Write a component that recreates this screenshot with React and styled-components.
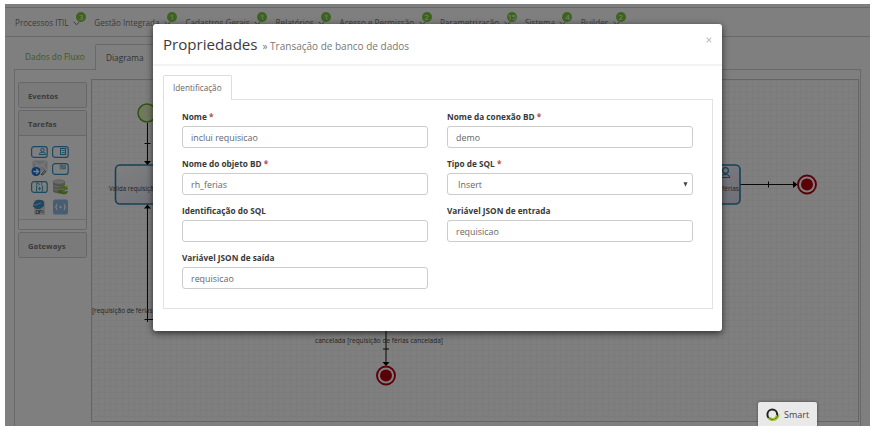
import React from "react";
import styled, { createGlobalStyle } from "styled-components";

const GlobalStyle = createGlobalStyle`
  * { box-sizing: border-box; }
  body { margin: 0; background: #fff; font-family: "Open Sans", sans-serif; font-size: 9px; color: #555; }
`;

const Frame = styled.div`
  position: relative;
  width: 865px;
  height: 422px;
  margin: 4px 0 0 5px;
  overflow: hidden;
  background: #fff;
`;

const MenuBar = styled.nav`
  display: flex;
  gap: 14.4px;
  height: 30px;
  margin-top: 3px;
  padding: 1px 0 0 10px;
  align-items: center;
  border-top: 1px solid #d2d2d2;
  border-bottom: 1px solid #d2d2d2;
`;

const MenuItem = styled.div`
  position: relative;
  display: flex;
  align-items: center;
  gap: 4.5px;
  white-space: nowrap;
  font-size: 8.15px;
  line-height: 12px;
  color: #777;
`;

const Badge = styled.span`
  position: absolute;
  top: -5px;
  right: -6px;
  width: 10px;
  height: 10px;
  border-radius: 50%;
  background: #79c83c;
  color: #fff;
  font-size: 7.5px;
  letter-spacing: -0.3px;
  line-height: 10px;
  text-align: center;
`;

const TabStrip = styled.div`
  display: flex;
  align-items: flex-end;
  height: 32px;
  padding-left: 10px;
`;

const PageTab = styled.div`
  height: ${(p) => (p.$active ? 26 : 25)}px;
  margin-bottom: ${(p) => (p.$active ? "-1px" : 0)};
  padding: 0 10px;
  width: ${(p) => p.$width}px;
  line-height: 26px;
  font-size: 8.3px;
  white-space: nowrap;
  color: ${(p) => (p.$active ? "#666" : "#73b446")};
  background: #fff;
  border: ${(p) => (p.$active ? "1px solid #d2d2d2" : "none")};
  border-bottom: none;
  border-radius: 2px 2px 0 0;
`;

const Workspace = styled.div`
  display: grid;
  grid-template-columns: 69px 768px;
  gap: 4px;
  width: 847px;
  height: 360px;
  margin-left: 9px;
  padding: 9px 0 0 3px;
  border: 1px solid #d2d2d2;
`;

const Palette = styled.aside`
  display: flex;
  flex-direction: column;
  gap: 2px;
  padding-top: 3px;
`;

const Group = styled.section`
  border: 1px solid #cfcfcf;
  border-radius: 2px;
`;

const GroupTitle = styled.div`
  height: ${(p) => (p.$open ? 25 : 24)}px;
  padding-left: 9px;
  line-height: 26px;
  font-size: 7.7px;
  font-weight: 700;
  color: #777;
  background: #f5f5f5;
  border-bottom: ${(p) => (p.$open ? "1px solid #cfcfcf" : "none")};
`;

const IconGrid = styled.div`
  display: grid;
  grid-template-columns: 17px 17px;
  grid-template-rows: 17px 17px 20px 19px;
  column-gap: 4px;
  padding: 7px 0 0 12px;
  height: 83px;
  align-items: center;
`;

const GroupFooter = styled.div`
  height: 10px;
  border-top: 1px solid #ddd;
`;

const Canvas = styled.div`
  border: 1px solid #cbcbcb;
  height: 343px;
  overflow: hidden;
  background-image: linear-gradient(#f6f6f6 1px, transparent 1px),
    linear-gradient(90deg, #f6f6f6 1px, transparent 1px);
  background-size: 6px 6px;
`;

const Backdrop = styled.div`
  position: absolute;
  inset: 0;
  background: rgba(0, 0, 0, 0.5);
`;

const Dialog = styled.div`
  position: absolute;
  left: 148px;
  top: 20px;
  width: 569px;
  height: 307px;
  background: #fff;
  border-radius: 3px;
  box-shadow: 0 2px 7px rgba(0, 0, 0, 0.65);
`;

const DialogHeader = styled.header`
  display: flex;
  align-items: baseline;
  height: 42px;
  padding: 9px 10px 0 10px;
  border-bottom: 2px solid #f3f3f3;
`;

const Title = styled.h1`
  margin: 0;
  font-size: 15.1px;
  font-weight: 400;
  line-height: 22px;
  color: #3c3c3c;
`;

const Subtitle = styled.small`
  margin-left: 5px;
  font-size: 10px;
  color: #777;
  white-space: nowrap;
`;

const Close = styled.button`
  margin: -18px 0 0 auto;
  padding: 0;
  align-self: center;
  border: 0;
  background: none;
  line-height: 0;
`;

const DialogBody = styled.div`
  padding: 9px 9px 0 10px;
`;

const DialogTab = styled.div`
  position: relative;
  width: 69px;
  height: 25px;
  margin-bottom: -1px;
  padding-left: 9px;
  border: 1px solid #ddd;
  border-bottom: 0;
  border-radius: 2px 2px 0 0;
  background: #fff;
  font-size: 8.2px;
  line-height: 24px;
  color: #666;
`;

const Fields = styled.form`
  display: grid;
  grid-template-columns: 246px 246px;
  grid-auto-rows: 47px;
  column-gap: 19px;
  height: 210px;
  padding: 10px 0 0 18px;
  border: 1px solid #e2e2e2;
`;

const Field = styled.label`
  display: block;
`;

const FieldLabel = styled.span`
  display: block;
  height: 16px;
  line-height: 13px;
  font-size: 8.25px;
  font-weight: 700;
  color: #393939;
`;

const Required = styled.span`
  color: #b94a48;
`;

const Control = styled.span`
  display: flex;
  align-items: center;
  justify-content: space-between;
  height: 22px;
  padding: 0 4px 0 ${(p) => (p.$select ? 10 : 8)}px;
  border: 1px solid #ccc;
  border-radius: 3px;
  font-size: 8.9px;
  color: #666;
`;

const SmartButton = styled.button`
  position: absolute;
  left: 753px;
  top: 398px;
  width: 59px;
  height: 25px;
  display: flex;
  align-items: center;
  gap: 4px;
  padding: 0 0 0 8px;
  border: 0;
  border-radius: 2px 2px 0 0;
  background: #e9e9e9;
  box-shadow: 0 0 3px rgba(0, 0, 0, 0.45);
  font-family: inherit;
  font-size: 9px;
  color: #444;
`;

const menu = [
  ["Processos ITIL", 3],
  ["Gestão Integrada", 1],
  ["Cadastros Gerais", 1],
  ["Relatórios", 1],
  ["Acesso e Permissão", 2],
  ["Parametrização", 15],
  ["Sistema", 4],
  ["Builder", 2],
];

const fields = [
  { label: "Nome", required: true, value: "inclui requisicao" },
  { label: "Nome da conexão BD", required: true, value: "demo" },
  { label: "Nome do objeto BD", required: true, value: "rh_ferias" },
  { label: "Tipo de SQL", required: true, value: "Insert", select: true },
  { label: "Identificação do SQL", value: "" },
  { label: "Variável JSON de entrada", value: "requisicao" },
  { label: "Variável JSON de saída", value: "requisicao" },
];

const ChevronSvg = styled.svg`
  margin-top: 2px;
`;

const Chevron = () => (
  <ChevronSvg width="7" height="5" viewBox="0 0 7 5" fill="none" stroke="#777">
    <path d="M.5 .7 3.5 3.8 6.5 .7" />
  </ChevronSvg>
);

function TaskIcon({ kind }) {
  return (
    <svg width="17" height="12" viewBox="0 0 17 12" fill="none" stroke="#3694c0">
      <rect x=".6" y=".6" width="15.6" height="10.8" rx="2.5" strokeWidth="1.2" />
      {kind === "user" && (
        <g>
          <circle cx="11.5" cy="4" r="1.7" />
          <path d="M8.2 8.5c0-2 1.8-2 3.3-2s3.3 0 3.3 2z" />
        </g>
      )}
      {kind === "form" && (
        <g>
          <rect x="8.500" y="2.500" width="5" height="6" />
          <path d="M9.800 4.500h3M9.800 6.500h3" strokeWidth=".8" />
        </g>
      )}
      {kind === "card" && (
        <g>
          <rect x="8" y="2" width="5.6" height="4" fill="#b7d5e4" strokeWidth=".4" />
          <path d="M8.8 3.6h2M11 5h2" strokeWidth=".8" />
        </g>
      )}
      {kind === "rule" && (
        <g>
          <path d="M5.5 4V1.7h1.2v1.2H5.5M8 1.7v2h1M10.5 4V1.7h1.2" strokeWidth=".7" />
          <path d="M6.7 5H5.5v5.2h1.2M10.5 5h1.2v5.2h-1.2M8.6 5.8v3.6M6.8 7.6h3.6" strokeWidth=".9" />
        </g>
      )}
    </svg>
  );
}

const MailIcon = () => (
  <svg width="17" height="17" viewBox="0 0 17 17">
    <path d="M2 1h14v9H2z" fill="#d4d8df" stroke="#b4bac4" strokeWidth=".6" />
    <path d="M2 1l7 5.5L16 1M2 10l5-5M16 10l-5-5" fill="none" stroke="#fff" />
    <circle cx="5" cy="11.5" r="4.5" fill="#1c70cf" />
    <path d="M2.2 11.5h5M5.2 9l2.4 2.5L5.2 14" fill="none" stroke="#fff" strokeWidth="1.3" />
    <path d="M10.2 14.5l3.5-4.2M12 14.8l3.4-4M10.2 14.5l1.8.3" fill="none" stroke="#555" />
  </svg>
);

const DatabaseIcon = () => (
  <svg width="17" height="17" viewBox="0 0 17 17">
    <path d="M1 3v9c0 3 12 3 12 0V3z" fill="#a5aaa8" />
    <ellipse cx="7" cy="3" rx="6" ry="2.2" fill="#d5d8d6" stroke="#999" strokeWidth=".5" />
    <path d="M1 6.3c1 2 11 2 12 0M1 9.5c1 2 11 2 12 0" fill="none" stroke="#dedede" strokeWidth=".8" />
    <path d="M6 9.5c1-4 6-4 8-1.5l1.2-1.5.6 4.5-4.7-.5 1.3-1C10.5 8 9 8 8 10z" fill="#91cc30" />
    <path d="M16 12.2c-1.2 3.6-5.5 4-7.8 1.8L7 15.3 6.3 11l4.8.6-1.3 1c1.6 1.5 3 1 4-.6z" fill="#6ead20" />
  </svg>
);

const ScriptIcon = () => (
  <svg width="17" height="16" viewBox="0 0 17 16">
    <path d="M3 1h9l2 2v13H3z" fill="#dedede" />
    <path d="M4 2.5c1-2.3 8-2.3 9 .5v4l-4 3H5L2 7.5V5z" fill="#3f8cc6" />
    <path d="M2 5.500c3 1.500 4-.5 8-1.500" stroke="#d6e9f5" fill="none" strokeWidth=".8" />
    <path d="M5 11.5v3h2.5v-3H5M8.5 14.8v-3.3H11M8.5 13h2M12 11.5v3" fill="none" stroke="#555" strokeWidth=".7" />
  </svg>
);

const BracesIcon = () => (
  <svg width="17" height="16" viewBox="0 0 17 16">
    <rect x="1" y=".5" width="15" height="15" rx="2" fill="#90b8e5" />
    <path d="M5.3 5c-1.3 0-.4 2.300-1.600 3 1.200.7.300 3 1.600 3M11.700 5c1.300 0 .4 2.300 1.600 3-1.200.7-.3 3-1.600 3M8.500 6.700v2.600M7.200 8h2.600" fill="none" stroke="#fff" strokeWidth="1.100" />
  </svg>
);

const EndEvent = ({ x, y }) => (
  <g>
    <circle cx={x} cy={y} r="9" fill="#fff" stroke="#b4000c" strokeWidth="1.9" />
    <circle cx={x} cy={y} r="6" fill="#b4000c" />
  </g>
);

/* The drawing's user units are frame coordinates. */
const Diagram = () => (
  <svg
    width="767"
    height="341"
    viewBox="92 80 767 341"
    fontFamily="'Open Sans', sans-serif"
    fontSize="7.7"
    fill="#444"
  >
    <defs>
      <linearGradient id="task" x1="0" y1="0" x2="1" y2="1">
        <stop offset="0" stopColor="#fff" />
        <stop offset="1" stopColor="#dcdff2" />
      </linearGradient>
    </defs>
    <circle cx="147" cy="113" r="9" fill="#e2f0c0" stroke="#62a51c" strokeWidth="1.5" />
    <g fill="url(#task)" stroke="#2a83ad" strokeWidth="1.6">
      <rect x="115.5" y="165" width="70" height="39" rx="4.5" />
      <rect x="670" y="165" width="70" height="39" rx="4.5" />
    </g>
    <g fill="none" stroke="#111" strokeWidth="1">
      <path d="M147.5 123V162M144.5 143.5h6" />
      <path d="M147.5 207V319.5H170M144.5 319.5h6M147.500 317v5" />
      <path d="M740.5 184.5H794M768.5 181.5v6M386 330v32M383 349h6" />
    </g>
    <g fill="#000">
      <path d="M144 161h7l-3.5 4zM144 208.5h7l-3.5-4zM793 181l4.5 3.5-4.5 3.5zM382.5 362h7l-3.5 4z" />
    </g>
    <g fill="none" stroke="#2a83ad" strokeWidth="1.2">
      <circle cx="725.5" cy="170.5" r="2.9" />
      <path d="M721 177.5c0-3 2.5-3 4.5-3s4 0 4 3z" />
    </g>
    <text x="109" y="191" textLength="48" lengthAdjust="spacingAndGlyphs">Valida requisição</text>
    <text x="722" y="191" textLength="17" lengthAdjust="spacingAndGlyphs">férias</text>
    <text x="92" y="313" textLength="60.5" lengthAdjust="spacingAndGlyphs">[requisição de férias</text>
    <text x="315" y="342.5" textLength="128" lengthAdjust="spacingAndGlyphs">cancelada [requisição de férias cancelada]</text>
    <EndEvent x={807} y={184.5} />
    <EndEvent x={386} y={375.5} />
  </svg>
);

const SmartLogo = () => (
  <svg width="14" height="14" viewBox="0 0 14 14" fill="none">
    <circle cx="6.3" cy="6.5" r="4.9" stroke="#222" strokeWidth="2" />
    <path d="M12.8 6.3c.2 6-7.300 7.900-10.600 4M3.5 9.3c3 2.5 7 1 7-2.3" stroke="#a4c936" strokeWidth="1.4" />
  </svg>
);

export default function App() {
  return (
    <>
      <GlobalStyle />
      <Frame>
        <MenuBar>
          {menu.map(([name, count]) => (
            <MenuItem key={name}>
              {name}
              <Chevron />
              <Badge>{count}</Badge>
            </MenuItem>
          ))}
        </MenuBar>
        <TabStrip>
          <PageTab $width={80}>Dados do Fluxo</PageTab>
          <PageTab $active $width={62}>Diagrama</PageTab>
        </TabStrip>
        <Workspace>
          <Palette>
            <Group><GroupTitle>Eventos</GroupTitle></Group>
            <Group>
              <GroupTitle $open>Tarefas</GroupTitle>
              <IconGrid>
                <TaskIcon kind="user" />
                <TaskIcon kind="form" />
                <MailIcon />
                <TaskIcon kind="card" />
                <TaskIcon kind="rule" />
                <DatabaseIcon />
                <ScriptIcon />
                <BracesIcon />
              </IconGrid>
              <GroupFooter />
            </Group>
            <Group><GroupTitle>Gateways</GroupTitle></Group>
          </Palette>
          <Canvas><Diagram /></Canvas>
        </Workspace>
        <Backdrop />
        <Dialog role="dialog">
          <DialogHeader>
            <Title>Propriedades</Title>
            <Subtitle>» Transação de banco de dados</Subtitle>
            <Close aria-label="Fechar">
              <svg width="6" height="6" viewBox="0 0 6 6" stroke="#c4c4c4" strokeWidth="1.2">
                <path d="M.7 .7l4.600 4.600M5.300 .7l-4.600 4.600" />
              </svg>
            </Close>
          </DialogHeader>
          <DialogBody>
            <DialogTab>Identificação</DialogTab>
            <Fields>
              {fields.map((f) => (
                <Field key={f.label}>
                  <FieldLabel>
                    {f.label} {f.required && <Required>*</Required>}
                  </FieldLabel>
                  <Control $select={f.select}>
                    {f.value}
                    {f.select && (
                      <svg width="5" height="5" viewBox="0 0 5 5" fill="#444">
                        <path d="M.5 .3h4L2.5 4.7z" />
                      </svg>
                    )}
                  </Control>
                </Field>
              ))}
            </Fields>
          </DialogBody>
        </Dialog>
        <SmartButton>
          <SmartLogo />
          Smart
        </SmartButton>
      </Frame>
    </>
  );
}
